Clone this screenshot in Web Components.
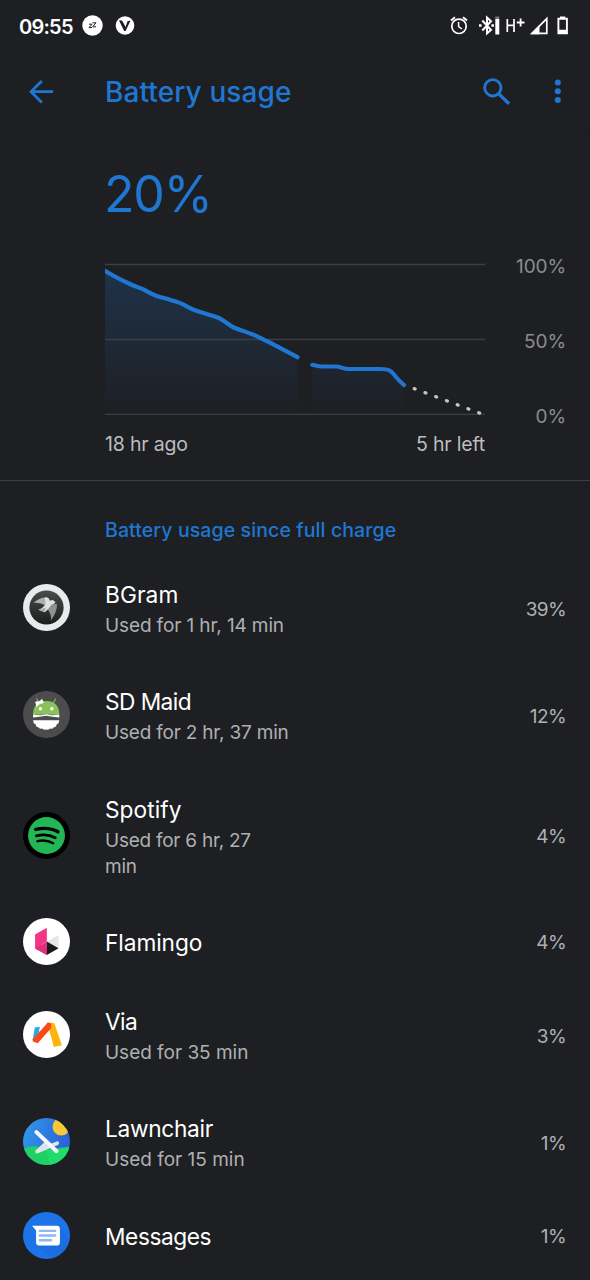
<!DOCTYPE html>
<html lang="en">
<head>
<meta charset="utf-8">
<title>Battery usage</title>
<style>
  body {
    margin: 0;
    width: 590px;
    height: 1280px;
    overflow: hidden;
    background: #1e1f23;
    color: #fff;
    font-family: Inter, "Open Sans", sans-serif;
    --accent: #1f77d2;
    --muted: #afb0b3;
    --line: #3d3e42;
  }
</style>
</head>
<body>
<battery-screen>
  <status-bar slot="status" time="09:55"></status-bar>
  <app-bar slot="bar">Battery usage</app-bar>
  <battery-summary slot="summary" level="20%" since="18 hr ago" left="5 hr left"></battery-summary>

  <app-row name="BGram" value="39%" style="--name-ls:0.1px;--note-ls:-0.12px">
    <svg slot="icon" viewBox="40 42 140 140">
      <defs><linearGradient id="bg" x1="0" y1="0" x2="0" y2="1"><stop stop-color="#4a4c4c"/><stop offset="1" stop-color="#1c1e1e"/></linearGradient></defs>
      <circle cx="110" cy="112" r="70" fill="#e9eaed"/>
      <circle cx="110" cy="112" r="51" fill="url(#bg)"/>
      <path d="M72 98 Q86 84 105 82 L116 85 L122 97 L110 108Q94 97 72 98Z" fill="#aeb0b0"/>
      <path d="M105 82 Q116 80 120 92 L129 90 L137 96 Q130 102 126 108 L113 119 L105 126 L86 119 Q99 114 107 103 Z" fill="#e0e1e1"/>
      <path d="M126 102 L141 101 Q143 124 123 151 Q126 134 114 118Z" fill="#8f9191"/>
      <path d="M86 119 L108 112 L104 126Z" fill="#a8aaaa"/>
    </svg>
    Used for 1 hr, 14 min
  </app-row>

  <app-row name="SD Maid" value="12%" style="--name-ls:-0.55px;--note-ls:-0.2px">
    <svg slot="icon" viewBox="41 43 140 140">
      <circle cx="111" cy="113" r="70" fill="#4c4c4d"/>
      <path d="M88 77 L82 66 M132 77 L138 67" stroke="#8bc15a" stroke-width="3" stroke-linecap="round"/>
      <path d="M71 114 Q71 73 110 73 Q149 73 149 114 Z" fill="#8bc15a"/>
      <circle cx="93" cy="96" r="5" fill="#fff"/><circle cx="127" cy="96" r="5" fill="#fff"/>
      <path d="M77 75 L91 73 L98 66 L103 79 L91 82 L81 91 L79 82Z" fill="#fff"/>
      <path d="M71 113 Q96 118 110 112 Q124 118 149 113 V122 Q129 121 110 117 Q91 121 71 122Z" fill="#fff"/>
      <path d="M71 130 H149 L147 138 Q145 142 141 142 Q141 151 133 151 Q129 157 121 155 Q116 161 110 157 Q104 161 99 155 Q91 157 87 151 Q79 151 79 142 Q75 142 73 138Z" fill="#fff"/>
    </svg>
    Used for 2 hr, 37 min
  </app-row>

  <app-row name="Spotify" value="4%" style="--name-ls:0.05px;--note-ls:-0.25px">
    <svg slot="icon" viewBox="41 43 140 140">
      <circle cx="111" cy="113" r="70" fill="#000"/>
      <circle cx="111" cy="113" r="55" fill="#22b655"/>
      <g fill="none" stroke="#000" stroke-linecap="round">
        <path d="M79 95 Q117 86 145 102" stroke-width="10"/>
        <path d="M81 114 Q112 106 137 120" stroke-width="8.5"/>
        <path d="M84 130 Q110 124 131 136" stroke-width="7"/>
      </g>
    </svg>
    Used for 6 hr, 27<br>min
  </app-row>

  <app-row name="Flamingo" value="4%" style="--name-ls:-0.08px" single>
    <svg slot="icon" viewBox="40 41 140 140">
      <circle cx="110" cy="111" r="70" fill="#fff"/>
      <path d="M76 90 L111 70 V111 L94 121 L111 131 V151 L76 132Z" fill="#f23586"/>
      <path d="M76 132 L111 111 V151Z" fill="#e22f7c"/>
      <path d="M111 111 L146 92 V131Z" fill="#e6e6e6"/>
      <path d="M111 111 L146 131 L111 151Z" fill="#18191b"/>
    </svg>
  </app-row>

  <app-row name="Via" value="3%" style="--name-ls:-0.6px;--note-ls:-0.02px">
    <svg slot="icon" viewBox="40 51 140 140">
      <circle cx="110" cy="121" r="70" fill="#fff"/>
      <path d="M75 100 L90 98 L84 137 L69 137Z" fill="#2ea7e8"/>
      <path d="M112 85 L133 87 L156 153 L132 158Z" fill="#fbb50d"/>
      <path d="M69 135 L114 85 L124 88 V102 L84 147 L69 142Z" fill="#f94a17"/>
    </svg>
    Used for 35 min
  </app-row>

  <app-row name="Lawnchair" value="1%" style="--name-ls:-0.3px;--note-ls:0">
    <svg slot="icon" viewBox="40 54 140 140">
      <defs>
        <linearGradient id="sky" x1="0" y1="0" x2="1" y2="0.3"><stop stop-color="#2f9ceb"/><stop offset="1" stop-color="#2b62d9"/></linearGradient>
        <clipPath id="disc"><circle cx="110" cy="124" r="70"/></clipPath>
      </defs>
      <g clip-path="url(#disc)">
        <path d="M40 54H180V194H40Z" fill="url(#sky)"/>
        <circle cx="154" cy="80" r="26" fill="#fbc834"/>
        <path d="M40 146 Q76 129 110 148 Q148 143 180 139 V194 H40Z" fill="#1fd063"/>
        <path d="M110 150 Q144 145 180 143 V194 H120Z" fill="#20dc69"/>
        <path d="M82 154 L110 128 M82 154 L142 129" stroke="#dfe4ea" stroke-width="11" stroke-linecap="round" fill="none"/>
        <path d="M80 96 L140 153" stroke="#f6f8fc" stroke-width="12" stroke-linecap="round"/>
      </g>
    </svg>
    Used for 15 min
  </app-row>

  <app-row name="Messages" value="1%" style="--name-ls:-0.42px" single>
    <svg slot="icon" viewBox="40 46 140 140">
      <circle cx="110" cy="116" r="70" fill="#1d73e8"/>
      <path d="M84 148 H142 Q150 148 150 140 V97 L176 128 Q164 174 128 184 L79 143Z" fill="#1b61c9" opacity=".3"/>
      <path d="M67 87 H140 Q150 87 150 97 V136 Q150 146 140 146 H89 Q79 146 79 136 V101Z" fill="#fff"/>
      <path d="M90 102 H136 M90 116 H136 M90 130 H124" stroke="#8db7f5" stroke-width="7" stroke-linecap="round"/>
    </svg>
  </app-row>
</battery-screen>

<script>
(function () {
  function define(name, render) {
    window.customElements.define(name, class extends HTMLElement {
      constructor() {
        super();
        var template = document.createElement('template');
        template.innerHTML = render(this);
        this.attachShadow({ mode: 'open' });
        this.shadowRoot.appendChild(template.content.cloneNode(true));
      }
    });
  }

  define('status-bar', function (el) {
    return `
    <style>
      :host {
        display: flex;
        align-items: center;
        height: 52px;
        padding: 0 21px 0 19px;
        box-sizing: border-box;
      }
      .time {
        width: 63px;
        font-size: 20px;
        font-weight: 600;
        letter-spacing: -0.75px;
        line-height: 24px;
        padding-top: 2px;
      }
      svg { display: block; flex: none; }
      .right { margin-left: auto; }
    </style>
    <span class="time">${el.getAttribute('time')}</span>
    <svg width="54" height="24" viewBox="82 14 54 24">
      <circle cx="92.5" cy="25.5" r="10.2" fill="#fff"/>
      <path d="M89 24.2 H92 L89 27.6 H92 M92.5 22.8 H96 L92.7 26.8 H96" fill="none" stroke="#222" stroke-width="1"/>
      <circle cx="125" cy="25.5" r="9.3" fill="#fff"/>
      <path d="M119 20.5 Q121.5 19.8 122.8 21.8 L125.6 27 L127.4 21.5 Q129.2 20.4 130.3 21 L125.6 31 H124.2Z" fill="#1e1f23"/>
    </svg>
    <svg class="right" width="120" height="28" viewBox="449 12 120 28" fill="none" stroke="#fff">
      <circle cx="459" cy="26.3" r="7.2" stroke-width="1.7"/>
      <path d="M458.6 22 V26.6 L462 29" stroke-width="1.5"/>
      <path d="M451 20.5 L455 17.2 M463 17.2 L467 20.5" stroke-width="2"/>
      <path d="M482.3 20.5 L491 30 L487 33.4 V17.6 L491 21.2 L482.3 30.5" stroke-width="2"/>
      <path d="M479 25.5 H481.6 M491.4 25.5 H494" stroke-width="2.4"/>
      <path d="M497.3 19 V34.5" stroke-width="4"/>
      <path d="M497.3 16.5 V19" stroke="#77787b" stroke-width="4"/>
      <path d="M507.3 19 V32 M514 19 V32 M507 25.3 H514" stroke-width="1.7"/>
      <path d="M516.8 22.5 H524.5 M520.6 18.5 V26.5" stroke-width="1.8"/>
      <path d="M532 33.4 L546.8 18.6 V33.4Z" stroke-width="1.7"/>
      <path d="M530.5 34.2 L539.5 25 V34.2Z" fill="#fff" stroke="none"/>
      <path d="M558.4 18.8 H566.9 V33.2 H558.4Z" stroke-width="1.9"/>
      <path d="M560 16.4 H565.3 V18.5 H560Z M558 29.8 H567.4 V34 H558Z" fill="#fff" stroke="none"/>
    </svg>`;
  });

  define('app-bar', function () {
    return `
    <style>
      :host {
        display: flex;
        align-items: center;
        height: 80px;
        padding: 0 24px;
        box-sizing: border-box;
        color: var(--accent);
        border-bottom: 1px solid #1b1c1f;
      }
      svg { display: block; flex: none; fill: none; stroke: currentColor; }
      h1 {
        flex: 1;
        margin: 0 0 0 46px;
        padding-top: 1px;
        font-size: 28px;
        font-weight: 500;
        line-height: 34px;
        letter-spacing: 0.1px;
      }
    </style>
    <svg width="35" height="35" viewBox="24 74 35 35" stroke-width="2.8">
      <path d="M53 91.7 H31.5 M41.8 81 L31 91.7 L41.8 102.4"/>
    </svg>
    <h1><slot></slot></h1>
    <svg width="88" height="35" viewBox="478 74 88 35">
      <circle cx="492.8" cy="87.8" r="8.2" stroke-width="2.8"/>
      <path d="M499 94 L509 103.8" stroke-width="3.4"/>
      <g fill="currentColor" stroke="none">
        <circle cx="557.8" cy="82.4" r="3"/><circle cx="557.8" cy="91.3" r="3"/><circle cx="557.8" cy="100" r="3"/>
      </g>
    </svg>`;
  });

  define('battery-summary', function (el) {
    // plot area: x 105..485, 100% at y 264.5, 0% at y 414.5
    var first = 'M104 270.2 C112 275 121 280 130 284 C134 286 138 287 141.7 288.7 C147 291 151 294 156.7 296 C161 297.5 166 298.5 170 299.7 C174 301 178 302 181.7 303.7 C186 305.5 190 308.5 195 310.3 C203 313.3 211 315 218.3 317.7 C224 320 229 325.5 235 328 C241 330.5 247 332 253.3 334.7 C259 337.3 264 340 270 342.7 L297.5 357.2';
    var second = 'M312.3 364.8 C316 365.6 319 366.5 323 366.5 H336 C341 366.5 343 369 349 369 H380 C390 369 391.5 371 396 377 C399 380.5 401 382.5 404 385';
    return `
    <style>
      :host {
        display: block;
        height: 349px;
        box-sizing: border-box;
        border-bottom: 1px solid var(--line);
        padding: 31px 24px 0 105px;
      }
      .level {
        color: var(--accent);
        font-size: 50px;
        font-weight: 380;
        line-height: 62px;
        letter-spacing: -1.2px;
        margin-left: -1px;
      }
      .plot { display: flex; justify-content: space-between; margin-top: 31px; height: 164px; }
      svg { display: block; margin-top: 2px; }
      .scale {
        display: flex;
        flex-direction: column;
        align-items: flex-end;
        gap: 51px;
        margin-top: -1px;
        color: #8b8c8f;
        font-size: 19px;
        line-height: 24px;
        letter-spacing: -0.1px;
      }
      .ends {
        display: flex;
        justify-content: space-between;
        width: 380px;
        margin-top: 11px;
        font-size: 19.5px;
        line-height: 26px;
        color: #bcbdbf;
        letter-spacing: -0.2px;
      }
    </style>
    <div class="level">${el.getAttribute('level')}</div>
    <div class="plot">
      <svg width="380" height="160" viewBox="105 258 380 160">
        <defs>
          <linearGradient id="area" gradientUnits="userSpaceOnUse" x1="0" y1="264" x2="0" y2="414">
            <stop stop-color="#1f77d2" stop-opacity=".23"/><stop offset="1" stop-color="#1f77d2" stop-opacity="0"/>
          </linearGradient>
        </defs>
        <path d="${first} V414 H104Z M312.3 364.8 L336 366.5 L349 369 H380 Q390 369 396 377 L404 385 V414 H312.3Z" fill="url(#area)"/>
        <path d="M105 264.5 H485 M105 339.5 H485 M105 414.3 H485" stroke="#3d3e41" stroke-width="1.3"/>
        <path d="${first} ${second}" fill="none" stroke="#1f77d2" stroke-width="4.2" stroke-linecap="round" stroke-linejoin="round"/>
        <path d="M414.2 388.6 L480 413.3" stroke="#bfc5c9" stroke-width="3.3" stroke-dasharray="1 10.48" stroke-linecap="round"/>
      </svg>
      <div class="scale"><span>100%</span><span>50%</span><span>0%</span></div>
    </div>
    <div class="ends"><span>${el.getAttribute('since')}</span><span>${el.getAttribute('left')}</span></div>`;
  });

  define('app-row', function (el) {
    return `
    <style>
      :host {
        display: flex;
        align-items: center;
        padding: 0 24px 0 23px;
      }
      ::slotted(svg) { display: block; width: 47px; height: 47px; flex: none; }
      .text { flex: 1; margin-left: 35px; padding: 25px 0 22.25px; }
      .name {
        font-size: 22.7px;
        line-height: 32px;
        letter-spacing: var(--name-ls, 0);
      }
      .note {
        margin-top: 2px;
        font-size: 19px;
        line-height: 26px;
        letter-spacing: var(--note-ls, 0);
        color: var(--muted);
      }
      :host([single]) .note { display: none; }
      .value {
        padding-top: 4px;
        font-size: 19px;
        line-height: 24px;
        letter-spacing: -0.6px;
        color: var(--muted);
      }
    </style>
    <slot name="icon"></slot>
    <div class="text">
      <div class="name">${el.getAttribute('name')}</div>
      <div class="note"><slot></slot></div>
    </div>
    <div class="value">${el.getAttribute('value')}</div>`;
  });

  define('battery-screen', function () {
    return `
    <style>
      :host { display: block; }
      h2 {
        margin: 0;
        padding: 34px 0 24px 105px;
        height: 15px;
        line-height: 30px;
        font-size: 19.5px;
        font-weight: 500;
        letter-spacing: 0.1px;
        color: var(--accent);
      }
    </style>
    <slot name="status"></slot>
    <slot name="bar"></slot>
    <slot name="summary"></slot>
    <h2>Battery usage since full charge</h2>
    <slot></slot>`;
  });
})();
</script>
</body>
</html>
